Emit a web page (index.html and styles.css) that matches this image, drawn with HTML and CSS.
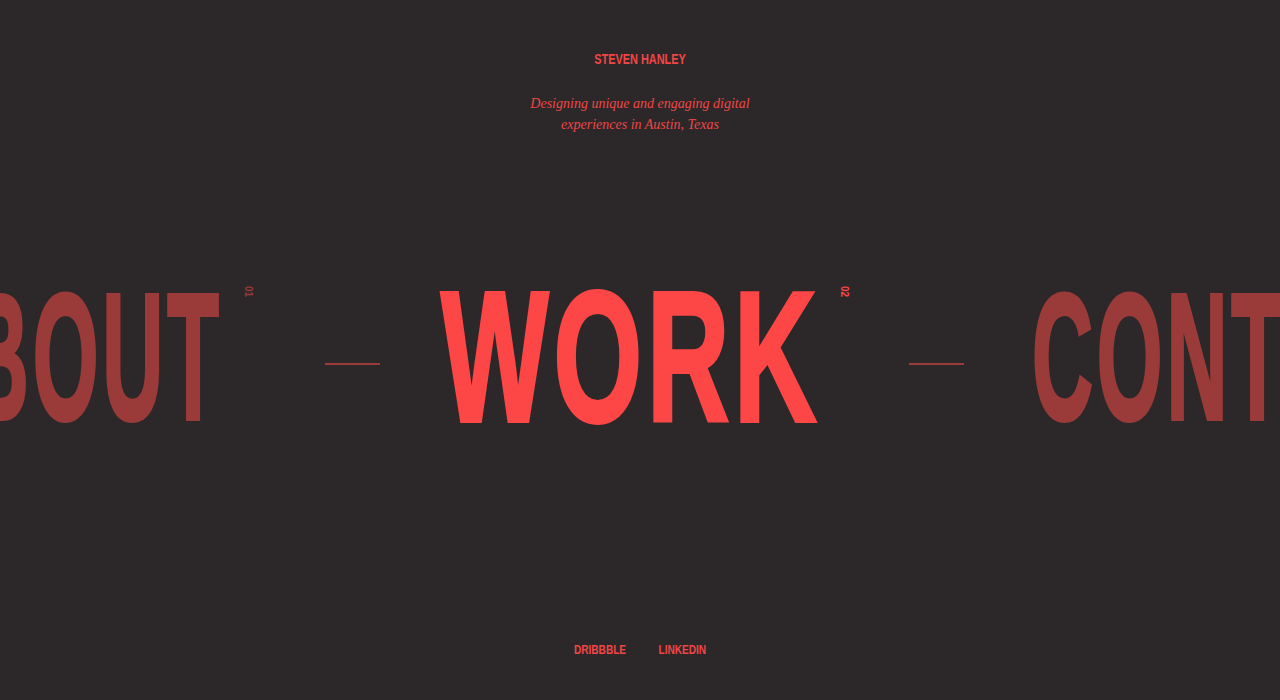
FILE: index.html
```html
<!DOCTYPE html>
<html lang="en">
<head>
<meta charset="utf-8">
<title>Steven Hanley</title>
<link rel="stylesheet" href="styles.css">
</head>
<body>
<div class="page">
  <header class="header">
    <div class="name">STEVEN HANLEY</div>
    <p class="tagline">Designing unique and engaging digital<br>experiences in Austin, Texas</p>
  </header>
  <main class="stage">
    <div class="side side-left">
      <a class="item dim item-about" href="#about"><span class="word-box w-about"><span class="word">ABOUT</span></span><span class="num">01</span></a>
      <span class="dash"></span>
    </div>
    <div class="center">
      <a class="item active" href="#work"><span class="word-box w-work"><span class="word">WORK</span></span><span class="num">02</span></a>
    </div>
    <div class="side side-right">
      <span class="dash"></span>
      <a class="item dim" href="#contact"><span class="word-box w-contact"><span class="word">CONTACT</span></span><span class="num">03</span></a>
    </div>
  </main>
  <footer class="footer">
    <a href="#" class="social">DRIBBBLE</a>
    <a href="#" class="social">LINKEDIN</a>
  </footer>
</div>
</body>
</html>
```

FILE: styles.css
```css
* { box-sizing: border-box; }
html, body { margin: 0; padding: 0; }
body {
  background: #2c2829;
  color: #f04646;
  font-family: "Liberation Sans", sans-serif;
}
a { color: inherit; text-decoration: none; }
.page {
  width: 1280px;
  height: 700px;
  display: flex;
  flex-direction: column;
  overflow: hidden;
}
.header {
  height: 200px;
  padding-top: 51px;
  text-align: center;
}
.name {
  font-size: 14px;
  line-height: 16px;
  font-weight: 700;
  transform: scaleX(0.78);
}
.tagline {
  margin: 26px 0 0;
  font-family: "Liberation Serif", serif;
  font-style: italic;
  font-size: 14px;
  line-height: 21px;
}
.stage {
  height: 340px;
  display: grid;
  grid-template-columns: 1fr auto 1fr;
  align-items: start;
  padding-top: 86px;
}
.side { display: flex; align-items: flex-start; overflow: hidden; }
.side > * { flex-shrink: 0; }
.side-left { justify-content: flex-end; }
.side-right { justify-content: flex-start; }
.center { display: flex; justify-content: center; padding-left: 9px; }
.item { display: flex; align-items: flex-start; flex-shrink: 0; }
.item > * { flex-shrink: 0; }
.dim { color: #9b3b39; }
.active { color: #fd4646; }
.word-box {
  display: block;
  height: 140px;
  margin-top: 3px;
}
.w-work { width: 380px; }
.w-about { width: 320px; }
.w-contact { width: 440px; }
.word {
  display: block;
  font-weight: 700;
  font-size: 186px;
  line-height: 140px;
  letter-spacing: 8px;
  white-space: nowrap;
  -webkit-text-stroke: 4px currentColor;
  transform-origin: left top;
  transform: translateX(1px) scaleX(0.6125);
  margin-top: -2px;
}
.dim .word {
  font-size: 180px;
  transform: translateX(1px) scaleX(0.47);
}
.num {
  writing-mode: vertical-rl;
  font-size: 10px;
  font-weight: 700;
  line-height: 10px;
  margin-left: 19px;
  margin-top: 0;
}
.item-about .num { margin-left: 21px; }
.dash {
  display: block;
  width: 55px;
  height: 2px;
  background: #9b3b39;
  margin-top: 77px;
}
.side-left .dash { margin-left: 72px; margin-right: 51px; }
.side-right .dash { margin-left: 60px; margin-right: 67px; }
.footer {
  flex: 1;
  display: flex;
  justify-content: center;
  gap: 23.5px;
  padding-top: 103px;
}
.social {
  font-size: 12px;
  font-weight: 700;
  line-height: 14px;
  transform: scaleX(0.84);
}
```
